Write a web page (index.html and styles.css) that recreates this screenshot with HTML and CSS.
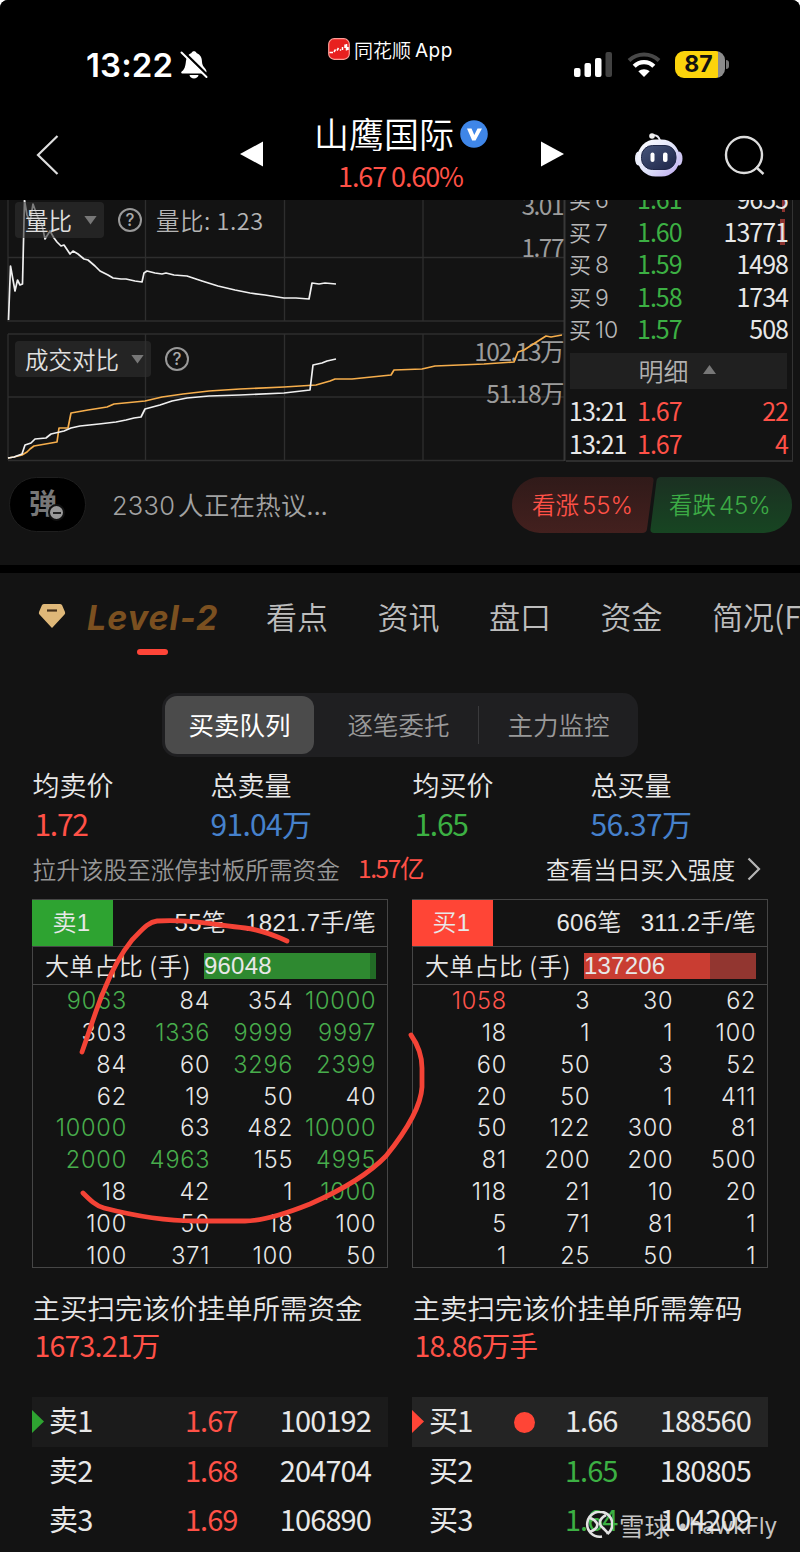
FILE: index.html
```html
<!DOCTYPE html>
<html lang="zh-CN">
<head>
  <meta charset="UTF-8">
  <meta name="viewport" content="width=device-width, initial-scale=1.0">
  <title>山鹰国际</title>
  <link rel="stylesheet" href="styles.css">
</head>
<body>
  <div class="screen">
    <header class="top">
      <div class="status">
        <div class="clock">13:22
          <svg width="28" height="30" viewBox="0 0 28 30">
            <path d="M3 20.500C6 17 5.500 12 6.500 8.500C7.500 5.500 9.500 3.500 11.500 3C12 .8 16 .8 16.500 3C20.500 4.500 22 8 22 12C22.200 17 26.500 18.500 26.500 21.500C26.500 23 25.500 23.500 24 23.500H3C.5 23.500.8 22 3 20.500Z" fill="#fff"/>
            <path d="M9.500 25h9c-.5 4.500-8.500 4.500-9 0z" fill="#fff"/>
            <path d="M3 1.500L28 26" stroke="#000" stroke-width="3"/>
            <path d="M1.500 2.500L26.500 27" stroke="#fff" stroke-width="2" stroke-linecap="round"/>
          </svg>
        </div>
        <div class="from-app">
          <svg width="22" height="22" viewBox="0 0 22 22">
            <rect x=".7" y=".7" width="20.600" height="20.600" rx="5.500" fill="#e8201f" stroke="#ff9c95" stroke-width="1.200"/>
            <path d="M1.500 14.500h3.500M6 14l1.500-2.500M9 12.500l1.500-2.500M12 12.500l1-1M14.500 12V9M17 10V6.500M18.500 12.500V6M20 12V9" fill="none" stroke="#fff" stroke-width="1.500"/>
          </svg>
          <span>同花顺</span><span class="app">App</span>
        </div>
        <div class="phone-state">
          <svg class="signal" width="39" height="26" viewBox="0 0 39 26">
            <rect x="0" y="16" width="6.500" height="9" rx="2" fill="#fff"/>
            <rect x="10.500" y="11" width="6.500" height="14" rx="2" fill="#fff"/>
            <rect x="21" y="6" width="6.500" height="19" rx="2" fill="#fff"/>
            <rect x="31.500" y="0" width="6.500" height="25" rx="2" fill="#424242"/>
          </svg>
          <svg class="wifi" width="34" height="26" viewBox="0 0 34 26">
            <path d="M2 8.500C10.500.5 23.500.5 32 8.500" fill="none" stroke="#484848" stroke-width="4"/>
            <path d="M7.200 14.300C12.500 8.800 21.500 8.800 26.800 14.300" fill="none" stroke="#fff" stroke-width="4.200"/>
            <path d="M17 25L11.300 19.300C14.500 16.500 19.500 16.500 22.700 19.300Z" fill="#fff"/>
          </svg>
          <div class="battery"><span>87</span></div>
          <i class="battery-cap"></i>
        </div>
      </div>
      <nav class="title-bar">
        <svg class="back" width="24" height="40" viewBox="0 0 24 40"><path d="M21.500 1L2 20L21.500 39" fill="none" stroke="#ddd" stroke-width="2.200"/></svg>
        <svg class="prev" width="24" height="26" viewBox="0 0 24 26"><path d="M0 13L23 0.500V25.500Z" fill="#fff"/></svg>
        <div class="stock">
          <div class="stock-name">山鹰国际
            <svg width="28" height="28" viewBox="0 0 28 28">
              <circle cx="14" cy="14" r="13.800" fill="#3f86e8"/>
              <path d="M7 8.500h4.500l2.800 6.500 3.200-6.500H22L15.500 20.500h-3.300z" fill="#fff"/>
            </svg>
          </div>
          <div class="stock-price">1.67 0.60%</div>
        </div>
        <svg class="next" width="24" height="26" viewBox="0 0 24 26"><path d="M23 13L0 0.500V25.500Z" fill="#fff"/></svg>
        <svg class="robot" width="50" height="46" viewBox="0 0 50 46">
          <defs>
            <linearGradient id="shell" x1="0" y1="0" x2="1" y2="1"><stop offset="0" stop-color="#fff"/><stop offset=".55" stop-color="#dfe2fa"/><stop offset="1" stop-color="#bba6ee"/></linearGradient>
            <linearGradient id="visor" x1="0" y1="0" x2="1" y2="1"><stop offset="0" stop-color="#46547a"/><stop offset="1" stop-color="#1d2547"/></linearGradient>
          </defs>
          <path d="M18 3.500c4-1 6.500 0 8 5" fill="none" stroke="#e6e6ee" stroke-width="2"/>
          <circle cx="18" cy="4" r="2.800" fill="#eee"/>
          <ellipse cx="4.500" cy="26.500" rx="3.500" ry="7" fill="#e9ecfa"/>
          <ellipse cx="45" cy="26.500" rx="3.500" ry="7" fill="#cfc6f2"/>
          <rect x="3.500" y="7.500" width="42" height="37" rx="18" fill="url(#shell)"/>
          <rect x="7.500" y="13.500" width="34.500" height="24" rx="11" fill="url(#visor)" stroke="#202848"/>
          <rect x="16.500" y="20.500" width="4" height="9.500" rx="2" fill="#fff"/>
          <rect x="29" y="20.500" width="4.500" height="9.500" rx="2" fill="#fff"/>
        </svg>
        <svg class="search" width="42" height="42" viewBox="0 0 42 42"><circle cx="20" cy="20" r="18" fill="none" stroke="#ddd" stroke-width="2.400"/><path d="M32 32l7.500 7" stroke="#ddd" stroke-width="2.400"/></svg>
      </nav>
    </header>

    <section class="market">
      <div class="charts">
        <svg width="566" height="262" viewBox="0 200 566 262">
          <g fill="none" stroke="#2e2e2e" stroke-width="1.300">
            <path d="M8 200V321H564M8 257.500H564M145.500 200V321M284.500 200V321M423 200V321"/>
            <path d="M8 334H564M8 460.500H564M8 334V460M8 397H564M145.500 334V460M284.500 334V460M423 334V460"/>
          </g>
          <path d="M564.500 200V461" stroke="#383838" stroke-width="2"/>
          <g class="axis" text-anchor="end">
            <text x="563" y="215">3.01</text>
            <text x="563" y="257">1.77</text>
            <text x="563" y="361">102.13万</text>
            <text x="563" y="403">51.18万</text>
          </g>
          <polyline class="line white" points="8.500,320 10.500,266 15,291 17.500,280 20,285 22.500,284 24.500,200 27,215 30,222 33,204 38,218 42,225 45,239 50,231 54,238 57,242 61,246 64,245 70,254 73,251 78,254 84,259 88,260 95,266 100,271 108,275 113,278 121,279 126,279 135,281 142,282 144,273 147,271 155,273 162,274 166,273 174,275 187,276 202,281 218,286 235,290 250,293 265,295 284,298 296,298 309,299 312,283 319,284 325,283 336,284"/>
          <polyline class="line orange" points="8,458 14,457 22,455 27,452 30,449 34,446 57,442 59,428 60,428 68,428 71,413 88,410 107,407 114,404 145,401 162,397 183,394 209,391 240,389 284,387 316,385 330,381 335,379 352,379 391,375 394,370 422,369 435,366 484,364 514,362 518,352 524,350 546,336 551,337 562,335"/>
          <polyline class="line white" points="8,458 14,457 22,454 25,445 31,443 35,439 46,438 51,434 64,431 71,428 80,426 99,424 116,422 126,420 134,418 141,417 145,409 160,405 172,401 187,398 209,396 240,395 284,393 310,390 313,365 322,363 327,361 336,359"/>
        </svg>
        <div class="pick pick-ratio">
          <span class="select">量比 <i></i></span><span class="help">?</span><span class="reading">量比: 1.23</span>
        </div>
        <div class="pick pick-deal">
          <span class="select">成交对比 <i></i></span><span class="help">?</span>
        </div>
      </div>
      <div class="book">
        <div class="level"><span>买<b>6</b></span><em>1.61</em><strong>9655</strong></div>
        <div class="level"><span>买<b>7</b></span><em>1.60</em><strong>13771</strong></div>
        <div class="level"><span>买<b>8</b></span><em>1.59</em><strong>1498</strong></div>
        <div class="level"><span>买<b>9</b></span><em>1.58</em><strong>1734</strong></div>
        <div class="level"><span>买<b>10</b></span><em>1.57</em><strong>508</strong></div>
        <div class="detail">明细 <i></i></div>
        <div class="trade"><span>13:21</span><em>1.67</em><strong>22</strong></div>
        <div class="trade"><span>13:21</span><em>1.67</em><strong>4</strong></div>
      </div>
    </section>

    <section class="talk">
      <div class="danmu">弹<i></i></div>
      <div class="talking"><span class="count">2330</span>人正在热议...</div>
      <div class="votes">
        <svg width="280" height="56" viewBox="0 0 280 56">
          <defs>
            <linearGradient id="up" x1="0" y1="0" x2="0" y2="1"><stop offset="0" stop-color="#301a19"/><stop offset="1" stop-color="#43201e"/></linearGradient>
            <linearGradient id="down" x1="0" y1="0" x2="0" y2="1"><stop offset="0" stop-color="#1b3022"/><stop offset="1" stop-color="#174522"/></linearGradient>
          </defs>
          <path d="M28 0H138Q142 0 141.500 4L135 52Q134.500 56 130 56H28A28 28 0 0 1 28 0Z" fill="url(#up)"/>
          <path d="M149 0H252A28 28 0 0 1 252 56H142Q138 56 138.500 52L144.500 4Q145 0 149 0Z" fill="url(#down)"/>
        </svg>
        <span class="vote up">看涨<b>55%</b></span>
        <span class="vote down">看跌<b>45%</b></span>
      </div>
    </section>

    <nav class="tabs">
      <div class="level2">
        <svg width="28" height="24" viewBox="0 0 28 24"><path d="M6 0H22Q23 0 24 1L27 8Q27.500 9.500 26.500 10.500L14.500 23.500Q14 24 13.500 23.500L1.500 10.500Q0.500 9.500 1 8L4 1Q5 0 6 0Z" fill="#dfb879"/><path d="M9 6.500H19" stroke="#44301a" stroke-width="2.200"/></svg>
        <span>Level-2</span>
      </div>
      <a>看点</a><a>资讯</a><a>盘口</a><a>资金</a><a>简况(F10)</a>
    </nav>

    <div class="segment">
      <span class="on">买卖队列</span><span class="mid">逐笔委托</span><span>主力监控</span>
    </div>

    <section class="summary">
      <div><p>均卖价</p><b class="red indent">1.72</b></div>
      <div><p>总卖量</p><b class="blue">91.04万</b></div>
      <div><p>均买价</p><b class="green indent">1.65</b></div>
      <div><p>总买量</p><b class="blue">56.37万</b></div>
    </section>

    <div class="limit-up">
      <span class="limit-text">拉升该股至涨停封板所需资金</span>
      <b class="red">1.57亿</b>
      <span class="strength">查看当日买入强度</span>
      <svg width="14" height="24" viewBox="0 0 14 24"><path d="M1.500 1.500L12 12L1.500 22.500" fill="none" stroke="#b5b5b5" stroke-width="2.200"/></svg>
    </div>

    <section class="queues">
      <div class="queue sell">
        <div class="queue-head"><span class="tag">卖1</span><span class="orders">55笔</span><span class="avg">1821.7手/笔</span></div>
        <div class="queue-big"><span>大单占比 (手)</span><div class="bar"><i style="width:96.500%"></i><b>96048</b></div></div>
        <div class="cells">
          <b>9063</b><span>84</span><span>354</span><b>10000</b>
          <span>303</span><b>1336</b><b>9999</b><b>9997</b>
          <span>84</span><span>60</span><b>3296</b><b>2399</b>
          <span>62</span><span>19</span><span>50</span><span>40</span>
          <b>10000</b><span>63</span><span>482</span><b>10000</b>
          <b>2000</b><b>4963</b><span>155</span><b>4995</b>
          <span>18</span><span>42</span><span>1</span><b>1000</b>
          <span>100</span><span>50</span><span>18</span><span>100</span>
          <span>100</span><span>371</span><span>100</span><span>50</span>
        </div>
      </div>
      <div class="queue buy">
        <div class="queue-head"><span class="tag">买1</span><span class="orders">606笔</span><span class="avg">311.2手/笔</span></div>
        <div class="queue-big"><span>大单占比 (手)</span><div class="bar"><i style="width:73%"></i><b>137206</b></div></div>
        <div class="cells">
          <b>1058</b><span>3</span><span>30</span><span>62</span>
          <span>18</span><span>1</span><span>1</span><span>100</span>
          <span>60</span><span>50</span><span>3</span><span>52</span>
          <span>20</span><span>50</span><span>1</span><span>411</span>
          <span>50</span><span>122</span><span>300</span><span>81</span>
          <span>81</span><span>200</span><span>200</span><span>500</span>
          <span>118</span><span>21</span><span>10</span><span>20</span>
          <span>5</span><span>71</span><span>81</span><span>1</span>
          <span>1</span><span>25</span><span>50</span><span>1</span>
        </div>
      </div>
    </section>

    <section class="sweep">
      <div><p>主买扫完该价挂单所需资金</p><b>1673.21万</b></div>
      <div><p>主卖扫完该价挂单所需筹码</p><b>18.86万手</b></div>
    </section>

    <section class="quotes">
      <div class="side sell">
        <div class="quote first"><span>卖1</span><em class="red">1.67</em><strong>100192</strong></div>
        <div class="quote"><span>卖2</span><em class="red">1.68</em><strong>204704</strong></div>
        <div class="quote"><span>卖3</span><em class="red">1.69</em><strong>106890</strong></div>
      </div>
      <div class="side buy">
        <div class="quote first"><span>买1</span><i class="dot"></i><em>1.66</em><strong>188560</strong></div>
        <div class="quote"><span>买2</span><em class="green">1.65</em><strong>180805</strong></div>
        <div class="quote"><span>买3</span><em class="green">1.64</em><strong>104209</strong></div>
      </div>
    </section>

    <!-- hand drawn circle -->
    <svg class="marker" width="420" height="330" viewBox="60 905 420 330">
      <path d="M82 1052C90 1030 97 1006 105 988C115 963 124 950 132 940C142 930 148 922 157 921C190 919 215 925 245 928C262 930 276 936 287 941"/>
      <path d="M411 1035C418 1045 422 1055 422 1068V1087C421 1106 407 1130 386 1156C365 1178 335 1193 310 1204C285 1214 262 1221 245 1221H195C165 1221 135 1216 104 1208C96 1206 90 1200 83 1193"/>
    </svg>

    <div class="watermark">
      <svg width="28" height="28" viewBox="0 0 28 28" fill="none" stroke="#e2e2e2" stroke-width="2.600"><path d="M17 25.500A12.500 12.500 0 1 1 22.500 23"/><path d="M5 7C11 9 15 14 10 18C8 20 6 20 4 21M21 4C14 8 13 13 18 17C20 19 22 20 23 23"/></svg>
      <span class="xq">雪球</span><span class="colon">·</span><span class="who">hawkFly</span>
    </div>
  </div>
</body>
</html>
```
FILE: styles.css
```css
* {
  box-sizing: border-box;
}
body {
  margin: 0;
  background: #fff;
  font-family: "Noto Sans CJK SC", sans-serif;
  font-weight: 350;
  color: #e8e8e8;
}
p {
  margin: 0;
}
em, i {
  font-style: normal;
}
svg {
  display: block;
  flex: none;
}
.screen {
  position: relative;
  width: 800px;
  height: 1552px;
  overflow: hidden;
  background: #131313;
  border-radius: 8px 8px 0 0;
  white-space: nowrap;
}
.red { color: #ff5147; }
.green { color: #3cb043; }
.blue { color: #4681cc; }

/* header */
.top {
  height: 200px;
  background: #000;
}
.status {
  display: flex;
  height: 108px;
  padding-left: 86px;
}
.clock {
  display: flex;
  gap: 7px;
  width: 242px;
  padding-top: 50px;
  font: 600 33px/30px Inter, sans-serif;
  letter-spacing: 0.1px;
  color: #fff;
}
.from-app {
  display: flex;
  width: 246px;
  padding-top: 38px;
  line-height: 24px;
  font-size: 19px;
  color: #fff;
}
.from-app span {
  margin-left: 4px;
}
.from-app .app {
  font: 400 19px/25px Inter, sans-serif;
  letter-spacing: 0.5px;
}
.phone-state {
  display: flex;
  padding-top: 51px;
}
.signal { margin-top: 1px; }
.wifi { margin: 1px 0 0 14px; }
.battery {
  width: 50px;
  height: 27px;
  margin-left: 14px;
  border-radius: 9px;
  background: linear-gradient(90deg, #fcd40c 43px, #8c8c8c 43px);
  text-align: center;
  padding-right: 3px;
  font: 700 23px/27px Inter, sans-serif;
  color: #111;
}
.battery-cap {
  width: 3px;
  height: 9px;
  margin: 9px 0 0 1px;
  border-radius: 0 4px 4px 0;
  background: #777;
}
.title-bar {
  display: flex;
  height: 92px;
  padding-left: 36px;
}
.back { margin-top: 27px; }
.prev { margin: 33px 0 0 180px; }
.stock {
  width: 176px;
  margin-left: 50px;
}
.stock-name {
  display: flex;
  gap: 6px;
  height: 50px;
  line-height: 49px;
  font-size: 35px;
  color: #fff;
}
.stock-name svg { margin-top: 12px; }
.stock-price {
  padding-left: 24px;
  font-size: 27px;
  font-weight: 400;
  line-height: 36px;
  letter-spacing: -1.1px;
  color: #ff5147;
}
.next { margin: 33px 0 0 51px; }
.robot { margin: 24px 0 0 69px; }
.search { margin: 27px 0 0 40px; }

/* charts and order book */
.market {
  display: flex;
  height: 262px;
}
.charts {
  position: relative;
  width: 566px;
}
.axis {
  font-size: 24.500px;
  font-weight: 400;
  letter-spacing: -1.5px;
  fill: #9c9c9c;
}
.line {
  fill: none;
  stroke-width: 1.7;
  stroke-linejoin: round;
}
.line.white { stroke: #f0f0f0; }
.line.orange { stroke: #f6ae4c; }
.pick {
  position: absolute;
  left: 15px;
  display: flex;
  align-items: center;
  height: 36px;
}
.pick-ratio { top: 2px; }
.pick-deal { top: 141px; }
.select {
  display: flex;
  align-items: center;
  gap: 12px;
  height: 36px;
  padding: 0 7px 0 10px;
  border-radius: 4px;
  background: rgba(48, 48, 48, 0.6);
  font-size: 23.500px;
  color: #e0e0e0;
}
.select i, .detail i {
  width: 13px;
  height: 9px;
  background: #777;
  clip-path: polygon(0 0, 100% 0, 50% 100%);
}
.help {
  width: 24px;
  height: 24px;
  margin-left: 14px;
  border: 2px solid #999;
  border-radius: 50%;
  text-align: center;
  font: 500 17px/20px Inter, sans-serif;
  color: #aaa;
}
.reading {
  margin-left: 14px;
  font-size: 23.500px;
  letter-spacing: 0.5px;
  color: #b5b5b5;
}
.book {
  width: 227px;
  overflow: hidden;
  border-right: 1px solid #333;
  border-bottom: 2px solid #2e2e2e;
}
.level, .trade {
  display: flex;
  height: 32.500px;
  padding: 0 4px 0 3px;
  line-height: 30px;
  font-size: 25px;
  font-weight: 400;
}
.level:first-child {
  margin-top: -17px;
}
.level span, .trade span {
  width: 68px;
}
.level span {
  font-size: 22px;
  font-weight: 350;
  color: #b8b8b8;
}
.level b {
  margin-left: 4px;
  font: 300 23px Inter, sans-serif;
}
.level em {
  color: #3cb043;
  letter-spacing: -1px;
}
.level strong, .trade strong {
  flex: 1;
  text-align: right;
  font-weight: 400;
  letter-spacing: -1px;
}
.level:nth-child(2) strong {
  background: linear-gradient(#8e3430, #8e3430) right 3px center / 5px 26px no-repeat;
}
.level:first-child strong {
  background: linear-gradient(#8e3430, #8e3430) right 3px center / 3px 26px no-repeat;
}
.detail {
  display: flex;
  align-items: center;
  justify-content: center;
  gap: 14px;
  width: 217px;
  height: 36px;
  margin: 7px 0 5px 4px;
  padding: 0 3px 2px 0;
  background: #202020;
  font-size: 25px;
  color: #b0b0b0;
}
.detail i { transform: rotate(180deg); }
.trade {
  height: 33.500px;
  line-height: 32px;
}
.trade span { letter-spacing: -1px; }
.trade em { letter-spacing: -1px; }
.trade em, .trade strong { color: #ff5147; }

/* discussion */
.talk {
  display: flex;
  height: 111px;
  padding: 15px 0 0 9px;
  border-bottom: 8px solid #000;
}
.danmu {
  position: relative;
  width: 77px;
  height: 55px;
  padding-left: 19px;
  border: 1px solid #1e1e1e;
  border-radius: 28px;
  background: #000;
  font-size: 28px;
  font-weight: 700;
  line-height: 49px;
  color: #777;
}
.danmu i {
  position: absolute;
  left: 38px;
  top: 26px;
  width: 17px;
  height: 17px;
  border: 2px solid #111;
  border-radius: 50%;
  background: linear-gradient(#222, #222) center / 8px 2px no-repeat #999;
}
.talking {
  width: 409px;
  padding-left: 26px;
  font-size: 25.500px;
  line-height: 53px;
  letter-spacing: 0.2px;
  color: #a2a2a2;
}
.count {
  margin-right: 3px;
  font: 300 25.500px Inter, sans-serif;
}
.votes {
  position: relative;
  width: 280px;
  height: 56px;
  margin-left: 17px;
}
.vote {
  position: absolute;
  top: 0;
  line-height: 54px;
  font-size: 23.500px;
}
.vote b {
  margin-left: 3px;
  font: 300 24px Inter, sans-serif;
}
.vote.up { left: 20px; color: #ff5147; }
.vote.down { left: 157px; color: #3cab45; }

/* tabs */
.tabs {
  display: flex;
  height: 120px;
  overflow: hidden;
  padding-left: 38px;
  font-size: 31px;
  line-height: 86px;
  color: #bdbdbd;
}
.tabs a {
  flex: none;
  width: 111.500px;
}
.level2 {
  position: relative;
  display: flex;
  flex: none;
  gap: 21px;
  width: 228px;
}
.level2 svg { margin-top: 31px; }
.level2 span {
  font: italic 700 34px/89px Inter, sans-serif;
  letter-spacing: 1px;
  color: #7b5020;
}
.level2::after {
  content: "";
  position: absolute;
  left: 99px;
  top: 76px;
  width: 31px;
  height: 6px;
  border-radius: 3px;
  background: #ff4538;
}
.segment {
  display: flex;
  width: 476px;
  height: 64px;
  margin-left: 162px;
  padding: 3px;
  border-radius: 15px;
  background: #1f1f21;
  font-size: 25.500px;
  line-height: 56px;
  text-align: center;
  color: #999;
}
.segment span {
  flex: none;
  width: 159px;
}
.segment .on {
  width: 149px;
  border-radius: 12px;
  background: #4b4b4b;
  font-weight: 400;
  color: #fff;
}
.segment .mid {
  width: 165px;
  padding-left: 4px;
  background: linear-gradient(#3a3a3c, #3a3a3c) right center / 1px 38px no-repeat;
}

/* summary */
.summary {
  display: grid;
  grid-template-columns: 178px 202px 178px 1fr;
  height: 92px;
  padding: 9px 0 0 32.500px;
}
.summary p {
  font-size: 27px;
  line-height: 38px;
}
.summary b {
  display: block;
  font-size: 30px;
  font-weight: 400;
  line-height: 38px;
  letter-spacing: -0.7px;
}
.summary .indent {
  padding-left: 2px;
  letter-spacing: -1.3px;
}
.limit-up {
  display: flex;
  align-items: center;
  height: 40px;
  padding-left: 32.500px;
  font-size: 23.650px;
}
.limit-text {
  width: 325.500px;
  color: #989898;
}
.limit-up b {
  width: 188px;
  margin-top: -3px;
  font-weight: 400;
  font-size: 24.500px;
  letter-spacing: -1.4px;
}
.strength { width: 201px; }

/* queue boxes */
.queues {
  display: flex;
  gap: 24px;
  padding: 10px 0 0 32px;
}
.queue {
  width: 356px;
  height: 369px;
  border: 1px solid #464646;
}
.queue-head {
  display: flex;
  justify-content: flex-end;
  height: 47px;
  padding-right: 11px;
  border-bottom: 1px solid #464646;
  font: 350 24px/45px "Liberation Sans", "Noto Sans CJK SC", sans-serif;
  letter-spacing: 0.3px;
}
.tag {
  width: 81px;
  margin: 0 auto 0 -1px;
  padding-right: 2px;
  text-align: center;
}
.sell .tag { background: #2ea331; }
.buy .tag { background: #ff4536; }
.orders { margin-right: 19px; }
.queue-big {
  display: flex;
  align-items: center;
  height: 38px;
  padding-left: 12px;
  border-bottom: 1px solid #464646;
  font-size: 24px;
  line-height: 34px;
  letter-spacing: 0.6px;
}
.queue-big span {
  width: 159px;
  margin-top: -2px;
}
.bar {
  width: 172px;
  height: 26px;
}
.bar i {
  display: block;
  height: 26px;
}
.bar b {
  display: block;
  margin-top: -26px;
  font: 400 24px/26px "Liberation Sans", sans-serif;
  letter-spacing: 0.2px;
}
.sell .bar { background: #226b26; }
.sell .bar i { background: #2e8930; }
.buy .bar { background: #923630; }
.buy .bar i { background: #c93d32; }
.cells {
  display: grid;
  grid-template-columns: 94px 83.300px 83px 83px;
  grid-auto-rows: 31.850px;
  font: 300 23.500px/32px Inter, sans-serif;
  letter-spacing: 0.8px;
  text-align: right;
}
.cells b { font-weight: 300; }
.sell .cells b { color: #48ad4c; }
.buy .cells b { color: #ff544c; }

.sweep {
  display: grid;
  grid-template-columns: 380px 1fr;
  height: 129px;
  padding: 20px 0 0 32.500px;
}
.sweep p {
  font-size: 27.500px;
  line-height: 38px;
}
.sweep b {
  display: block;
  padding-left: 2px;
  font-size: 28.500px;
  font-weight: 400;
  line-height: 38px;
  letter-spacing: -0.8px;
  color: #ff5147;
}

/* quotes */
.quotes {
  display: flex;
  gap: 24px;
  padding-left: 32px;
}
.side { width: 356px; }
.quote {
  display: flex;
  position: relative;
  height: 49.500px;
  padding-left: 17px;
  font-size: 29px;
  font-weight: 400;
  line-height: 45px;
}
.quote span {
  width: 136px;
  letter-spacing: -0.8px;
}
.quote em {
  width: 60px;
  letter-spacing: -1px;
}
.quote strong {
  flex: 1;
  padding-right: 17px;
  text-align: right;
  font-weight: 400;
  letter-spacing: -0.9px;
}
.sell .first { background: #1b1b1b; }
.buy .first { background: #242424; }
.first::before {
  content: "";
  position: absolute;
  left: 0;
  top: 13px;
  width: 12px;
  height: 23px;
  background: #2ea331;
  clip-path: polygon(0 0, 100% 50%, 0 100%);
}
.buy .first::before { background: #ff4536; }
.dot {
  position: absolute;
  left: 102px;
  top: 15px;
  width: 21px;
  height: 21px;
  border-radius: 50%;
  background: #ff4536;
}

.marker {
  position: absolute;
  left: 60px;
  top: 905px;
  fill: none;
  stroke: #f44336;
  stroke-width: 4.8;
  stroke-linecap: round;
  stroke-linejoin: round;
}
.watermark {
  position: absolute;
  left: 585px;
  top: 1511px;
  display: flex;
  line-height: 27px;
  font-size: 25.500px;
  font-weight: 400;
  color: rgba(230, 230, 230, 0.85);
}
.xq { margin-left: 6px; }
.colon { width: 19px; text-align: center; }
.who {
  font: 400 22.500px/30px Inter, sans-serif;
}
```
